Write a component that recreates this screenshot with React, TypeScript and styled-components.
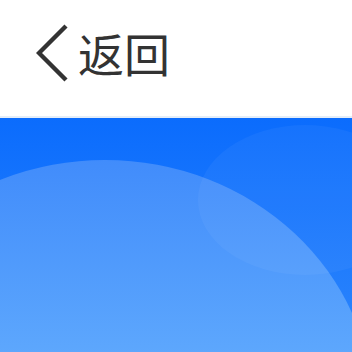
import React from "react";
import styled, { createGlobalStyle } from "styled-components";

const Global = createGlobalStyle`
  html, body { margin: 0; padding: 0; width: 352px; height: 352px; overflow: hidden; background: #fff; }
  #root { width: 352px; height: 352px; }
`;

const Page = styled.div`
  width: 352px;
  height: 352px;
  display: flex;
  flex-direction: column;
  font-family: "Noto Sans CJK SC", "Noto Sans", sans-serif;
`;

const Header = styled.header`
  height: 116px;
  flex: none;
  display: flex;
  align-items: flex-start;
  padding-left: 36px;
  gap: 8px;
  background: #ffffff;
  border-bottom: 2px solid #e4edf8;
  box-sizing: content-box;
`;

const BackIcon = styled.svg`
  width: 34px;
  height: 60px;
  flex: none;
  margin-top: 23px;
`;

const Title = styled.span`
  font-size: 46px;
  line-height: 1;
  color: #333333;
  margin-top: 29px;
`;

const Hero = styled.section`
  position: relative;
  flex: 1;
  overflow: hidden;
  background: linear-gradient(180deg, #0b6cfd 0%, #2d86fc 100%);
`;

const Blob = styled.div<{ $l: number; $t: number; $w: number; $h: number; $bg: string }>`
  position: absolute;
  left: ${(p) => p.$l}px;
  top: ${(p) => p.$t}px;
  width: ${(p) => p.$w}px;
  height: ${(p) => p.$h}px;
  border-radius: 50%;
  background: ${(p) => p.$bg};
`;

export default function App() {
  return (
    <Page>
      <Global />
      <Header>
        <BackIcon viewBox="0 0 34 60">
          <polyline
            points="30,3 3,30 30,57"
            fill="none"
            stroke="#333333"
            strokeWidth="4.4"
            strokeLinecap="butt"
            strokeLinejoin="miter"
          />
        </BackIcon>
        <Title>返回</Title>
      </Header>
      <Hero>
        <Blob
          $l={-163}
          $t={42}
          $w={536}
          $h={500}
          $bg="linear-gradient(180deg, #418cfb 0px, #5ea8fd 200px, #6ab0fd 500px)"
        />
        <Blob $l={198} $t={7} $w={214} $h={150} $bg="rgba(255,255,255,0.045)" />
      </Hero>
    </Page>
  );
}
